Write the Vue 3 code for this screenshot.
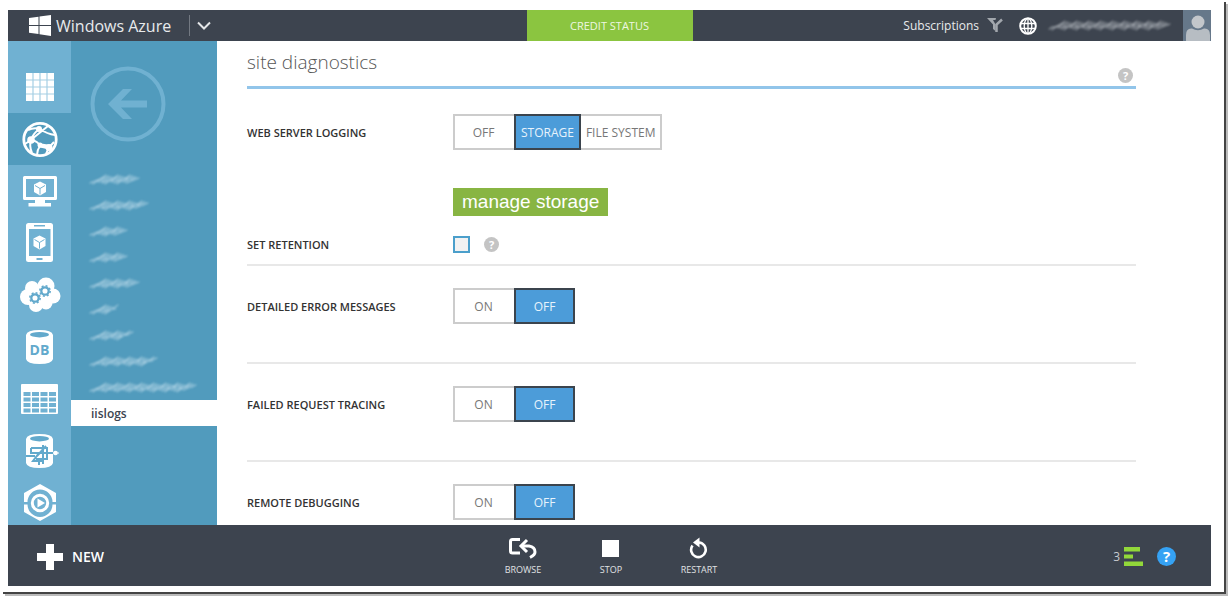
<script setup>
import { ref } from 'vue'

const services = ['All items', 'Web sites', 'Virtual machines', 'Mobile services', 'Cloud services', 'SQL databases', 'Storage', 'HDInsight', 'Media services']
const active = ref(1)

// Widths of the obscured site names, in pixels
const hiddenSites = [51, 60, 39, 41, 51, 32, 45, 69, 109]

// Slanted overlapping pen strokes that hide a name of the given width
function scribble(width) {
  let d = ''
  for (let x = 1; x < width - 13; x += 3) {
    const rise = (x * 7) % 4
    d += `M${x} ${12 - (x % 4)}L${x + 13} ${3 + rise}`
  }
  return d
}

const diagnostics = ref([
  { id: 'errors', label: 'DETAILED ERROR MESSAGES', value: 'OFF' },
  { id: 'tracing', label: 'FAILED REQUEST TRACING', value: 'OFF' },
  { id: 'debug', label: 'REMOTE DEBUGGING', value: 'OFF' }
])
const logging = ref('STORAGE')
const retention = ref(false)
</script>

<template>
  <div class="frame">
    <div class="portal">
      <header class="topbar">
        <div class="brand">
          <svg width="22" height="21" viewBox="0 0 22 21" aria-hidden="true">
            <path fill="#fff" d="M0 3 9.500 1.800V10H0zM10.500 1.600 22 0V10H10.500zM0 11H9.500V19L0 17.800zM10.500 11H22V21L10.500 19.300z" />
          </svg>
          <span class="name">Windows Azure</span>
          <button class="chev" aria-label="Switch portal">
            <svg width="14" height="9" viewBox="0 0 14 9"><path d="M1 1.500 7 7.500 13 1.500" fill="none" stroke="#e4e6e8" stroke-width="2" /></svg>
          </button>
        </div>
        <button class="credit">CREDIT STATUS</button>
        <div class="account">
          <button class="subs">Subscriptions
            <svg width="16" height="15" viewBox="0 0 16 15">
              <path d="M0 0H9L8.500 2H6L8.500 6.500V13L6 11V6.500z" fill="#a2a7ad" />
              <path d="M15 1.500 9.500 6.500V14" fill="none" stroke="#a2a7ad" stroke-width="2.500" />
            </svg>
          </button>
          <button class="globe" aria-label="Language">
            <svg width="18" height="18" viewBox="0 0 18 18" fill="none" stroke="#fff">
              <circle cx="9" cy="9" r="7.800" stroke-width="2" />
              <ellipse cx="9" cy="9" rx="3.800" ry="7.500" stroke-width="1.300" />
              <path d="M9 1V17M1.500 6.500H16.500M1.500 11.500H16.500" stroke-width="1.300" />
            </svg>
          </button>
          <svg class="smudge" width="126" height="15" viewBox="0 0 126 15" aria-hidden="true">
            <path :d="scribble(124)" stroke="#a9aeb4" />
            <path d="M3 9 120 7" stroke="#8d939b" />
          </svg>
          <button class="avatar" aria-label="Account">
            <svg width="28" height="31" viewBox="0 0 28 31">
              <circle cx="15" cy="12" r="6.500" fill="#c3c7cb" />
              <path d="M3 31V25Q3 18 9 18.500Q15 22 21 18.500Q27 18 27 25V31z" fill="#b7bdc3" />
            </svg>
          </button>
        </div>
      </header>

      <div class="body">
        <nav class="rail" aria-label="Services">
          <button v-for="(s, i) in services" :key="s" :class="{ on: i === active }" :aria-label="s" @click="active = i">
            <svg width="42" height="42" viewBox="0 0 42 42">
              <template v-if="i === 0">
                <rect x="7" y="7" width="28" height="28" fill="#fff" />
                <path d="M14 7V35M21 7V35M28 7V35M7 14H35M7 21H35M7 28H35" stroke="#a5cfe4" stroke-width="1.200" />
              </template>
              <template v-else-if="i === 1">
                <g fill="none" stroke="#fff">
                  <circle cx="21" cy="21.500" r="16.200" stroke-width="2.800" />
                  <path d="M9 12Q15 9 21 11Q28 16 36 17M21 11Q14 15 12 22Q10 28 13 35M12 22Q19 23 21 28L30 29.500M13 21 29 8M21 28Q18 32 18 37M30 29.500 35 24M30 29.500 27 36M12 22 6 26" stroke-width="2" />
                </g>
                <g fill="#fff">
                  <circle cx="20" cy="11" r="3" /><circle cx="12" cy="22" r="3.800" /><circle cx="21" cy="27" r="2.500" /><circle cx="30" cy="29.500" r="3.500" />
                  <path d="M19 25 32 27V32L19 29z" />
                </g>
              </template>
              <template v-else-if="i === 2">
                <path fill="#fff" fill-rule="evenodd" d="M5.500 6H36.500Q38 6 38 7.500V28.500Q38 30 36.500 30H26V33H32V36.500H9.500V33H16V30H5.500Q4 30 4 28.500V7.500Q4 6 5.500 6zM7 9V27H35V9z" />
                <path fill="#fff" d="M21 11.500 27 14.500V22L21 25.500 15 22V14.500z" />
                <path d="M16 15.500 21 18.500 26 15.500M21 18.500V24.500" stroke="#70b1d2" stroke-width="1" fill="none" />
              </template>
              <template v-else-if="i === 3">
                <path fill="#fff" fill-rule="evenodd" d="M9.500 1H31.500Q34 1 34 3.500V37.500Q34 40 31.500 40H9.500Q7 40 7 37.500V3.500Q7 1 9.500 1zM10 7V34H31.500V7zM15 3V4.500H26V3zM17.500 36V38H23.500V36z" />
                <path fill="#fff" d="M20.500 13.500 26.500 16.500V24L20.500 27.500 14.500 24V16.500z" />
                <path d="M15.500 17.500 20.500 20.500 25.500 17.500M20.500 20.500V26.500" stroke="#70b1d2" fill="none" />
              </template>
              <template v-else-if="i === 4">
                <g fill="#fff">
                  <circle cx="9" cy="23" r="8" /><circle cx="13" cy="14" r="7" /><circle cx="27" cy="12" r="8.500" /><circle cx="34" cy="22" r="7.500" /><circle cx="17" cy="31" r="7" /><circle cx="27" cy="29" r="6.500" />
                  <rect x="10" y="11" width="22" height="20" />
                </g>
                <g fill="none" stroke="#62a9cc">
                  <circle cx="16" cy="24" r="3.700" stroke-width="2.300" /><circle cx="16" cy="24" r="5.200" stroke-width="1.500" stroke-dasharray="2 2.080" />
                  <circle cx="26" cy="17" r="3.700" stroke-width="2.300" /><circle cx="26" cy="17" r="5.200" stroke-width="1.500" stroke-dasharray="2 2.080" />
                </g>
              </template>
              <template v-else-if="i === 5">
                <path fill="#fff" d="M7 9Q8 4 20.500 4T34 9V33Q33 38 20.500 38T7 33z" />
                <ellipse cx="20.500" cy="8.700" rx="9.500" ry="2.700" fill="#62a9cc" />
                <text x="20.500" y="29" text-anchor="middle" class="db">DB</text>
              </template>
              <template v-else-if="i === 6">
                <rect x="2" y="6" width="37" height="30" rx="1" fill="#fff" />
                <path d="M4.500 16H37M4.500 21.500H37M4.500 27H37M4.500 32.500H37" stroke="#70b1d2" stroke-width="4" stroke-dasharray="7 1.500" />
              </template>
              <template v-else-if="i === 7">
                <path fill="#fff" d="M7 9Q8 4 20.500 4T34 9V33Q33 38 20.500 38T7 33z" />
                <ellipse cx="20.500" cy="8.700" rx="9.500" ry="2.700" fill="#62a9cc" />
                <g fill="none" stroke="#62a9cc" stroke-width="2">
                  <path d="M12 18H28V29H17M12 18V23H20L14 31H24M24 15V34M18 26 27 16M20 30V35M7 26H16M22 23H34" />
                </g>
                <circle cx="36.500" cy="23" r="2.300" fill="#fff" /><path d="M34 23H40" stroke="#fff" />
              </template>
              <template v-else>
                <path fill="#fff" d="M21 2 37 11V20H33.500A12.500 12.500 0 0 0 8.500 20H5V11zM21 39 37 30V22.500H33.500A12.500 12.500 0 0 1 8.500 22.500H5V30z" />
                <circle cx="21" cy="21" r="7.700" fill="none" stroke="#fff" stroke-width="3" />
                <path d="M18.500 16.500V25.500L26 21z" fill="#fff" />
              </template>
            </svg>
          </button>
        </nav>

        <aside class="sites">
          <button class="back" aria-label="Back">
            <svg width="76" height="76" viewBox="0 0 76 76">
              <circle cx="38" cy="38" r="35.500" fill="none" stroke="#70b1d1" stroke-width="4" />
              <path fill="#70b1d1" d="M18 38 33 23H42L31 34.500H57V41.500H31L42 53H33z" />
            </svg>
          </button>
          <ul>
            <li v-for="(w, i) in hiddenSites" :key="i">
              <svg class="smudge" :width="w + 2" height="15" :viewBox="`-1 0 ${w + 2} 15`" aria-hidden="true">
                <path :d="scribble(w)" stroke="#b5d6e6" />
                <path :d="`M3 10 ${w - 5} 7`" stroke="#8fc0d8" />
              </svg>
            </li>
            <li class="current"><a href="#iislogs">iislogs</a></li>
          </ul>
        </aside>

        <main>
          <div class="title">
            <h1>site diagnostics</h1>
            <button class="help" aria-label="Help on diagnostics">?</button>
          </div>

          <section class="weblog">
            <div class="row">
              <span id="logging" class="label">WEB SERVER LOGGING</span>
              <div class="toggle" role="group" aria-labelledby="logging">
                <button v-for="o in ['OFF', 'STORAGE', 'FILE SYSTEM']" :key="o" :class="{ on: logging === o }" @click="logging = o">{{ o }}</button>
              </div>
            </div>
            <div class="row manage">
              <button class="storage">manage storage</button>
            </div>
            <div class="row">
              <label class="label" for="retention">SET RETENTION</label>
              <input id="retention" v-model="retention" type="checkbox">
              <button class="help" aria-label="Help on retention">?</button>
            </div>
          </section>

          <section v-for="d in diagnostics" :key="d.id" class="setting">
            <div class="row">
              <span :id="d.id" class="label">{{ d.label }}</span>
              <div class="toggle" role="group" :aria-labelledby="d.id">
                <button v-for="o in ['ON', 'OFF']" :key="o" :class="{ on: d.value === o }" @click="d.value = o">{{ o }}</button>
              </div>
            </div>
          </section>
        </main>
      </div>

      <footer>
        <button class="new">
          <svg width="26" height="26" viewBox="0 0 26 26"><path fill="#fff" d="M9 0H17V9H26V17H17V26H9V17H0V9H9z" /></svg>
          NEW
        </button>
        <div class="commands">
          <button>
            <svg width="28" height="22" viewBox="0 0 28 22" fill="none" stroke="#fff" stroke-width="3">
              <path d="M11 2.500H3.500Q1.500 2.500 1.500 4.500V14Q1.500 16 3.500 16H11" />
              <path d="M12 9H20Q26 10 26 15Q26 18 21 20.500" />
              <path d="M18 3 12 9 18 15" />
            </svg>
            BROWSE
          </button>
          <button>
            <svg width="28" height="22" viewBox="0 0 28 22"><rect x="5" y="3" width="17" height="17" fill="#fff" /></svg>
            STOP
          </button>
          <button>
            <svg width="28" height="22" viewBox="0 0 28 22">
              <path d="M7.500 8.500A7.300 7.300 0 1 0 14 5.500" fill="none" stroke="#fff" stroke-width="2.600" />
              <path d="M8 5.500 14.500 0.500V10.500z" fill="#fff" />
            </svg>
            RESTART
          </button>
        </div>
        <div class="status">
          <button class="jobs" aria-label="3 notifications">3
            <svg width="19" height="19" viewBox="0 0 19 19"><path fill="#92d83a" d="M0 0H16V4.500H0zM0 7.500H9V11.500H0zM0 14.500H19V19H0z" /></svg>
          </button>
          <button class="help blue" aria-label="Help">?</button>
        </div>
      </footer>
    </div>
  </div>
</template>

<style>
html, body { margin: 0; background: #fff; }
</style>

<style scoped>
* { box-sizing: border-box; }
.frame {
  height: 100vh;
  min-height: 400px;
  padding: 10px 17px 10px 8px;
  background:
    linear-gradient(#444, #444) right 2px top 2px / 2px calc(100% - 4px) no-repeat,
    linear-gradient(#444, #444) left 3px bottom 2px / calc(100% - 5px) 2px no-repeat,
    linear-gradient(#bbb, #bbb) right 0 top 4px / 2px 100% no-repeat,
    linear-gradient(#bbb, #bbb) left 5px bottom 0 / 100% 2px no-repeat,
    #fff;
  font-family: "Open Sans", "Noto Sans", sans-serif;
  color: #333;
}
button {
  margin: 0;
  padding: 0;
  border: 0;
  background: none;
  color: inherit;
  font: inherit;
  cursor: pointer;
}
svg { display: block; flex: none; }
.portal { display: flex; flex-direction: column; height: 100%; }
.topbar {
  display: grid;
  grid-template-columns: 1fr 166px 1fr;
  flex: 0 0 31px;
  background: #3d444f;
  color: #e8eaec;
}
.brand { display: flex; align-items: center; padding-left: 21px; }
.name { margin-left: 5px; font-size: 16px; line-height: 22px; }
.chev { margin-left: 18px; padding: 6px 7px; border-left: 1px solid #737982; }
.credit { background: #8bc540; color: #eef7e2; font-size: 11px; }
.account { display: flex; align-items: center; justify-content: flex-end; }
.subs { display: flex; align-items: center; gap: 8px; font-size: 12px; }
.globe { margin: 0 11px 0 16px; }
.smudge { fill: none; stroke-width: 1; stroke-linecap: round; filter: blur(1px); }
.avatar { margin-left: 9px; background: #66788a; }
.body { display: flex; flex: 1; min-height: 0; overflow: hidden; }
.rail {
  display: flex;
  flex-direction: column;
  flex: 0 0 63px;
  padding-top: 20px;
  background: #70b1d2;
}
.rail button {
  display: flex;
  flex: 0 0 52px;
  align-items: center;
  justify-content: center;
}
.rail .on { background: #519bbd; }
.db { fill: #62a9cc; font: 700 14px "Open Sans", sans-serif; }
.sites { flex: 0 0 146px; background: #519bbd; }
.back { display: block; margin: 25px 0 24px 19px; }
ul { margin: 0; padding: 0; list-style: none; }
li { display: flex; align-items: center; height: 26px; padding-left: 17px; }
.current { padding-left: 20px; background: #fff; font-size: 12px; font-weight: 600; }
.current a { color: #3c4450; text-decoration: none; }
main { flex: 1; min-width: 0; padding: 0 75px 0 30px; }
.title {
  display: flex;
  align-items: flex-start;
  justify-content: space-between;
  height: 48px;
  padding-right: 3px;
  border-bottom: 3px solid #92c5ea;
}
h1 { margin: 0; color: #555; font-size: 19px; font-weight: 300; line-height: 42px; }
.title .help { margin-top: 27px; }
.help {
  width: 15px;
  height: 15px;
  border-radius: 50%;
  background: #c4c4c4;
  color: #fff;
  font-size: 11px;
  font-weight: 700;
  line-height: 15px;
}
.row { display: flex; align-items: center; }
.label { flex: 0 0 206px; font-size: 11px; font-weight: 600; }
.weblog { padding: 25px 0 11px; border-bottom: 2px solid #e8e8e8; }
.toggle { display: flex; height: 36px; border: 2px solid #ccc; }
.toggle button {
  min-width: 61px;
  margin: -2px 0;
  padding: 0 5px;
  color: #777;
  font-size: 12px;
}
.toggle button:first-child { margin-left: -2px; }
.toggle button:last-child { margin-right: -2px; padding-right: 7px; }
.toggle .on, .toggle .on:last-child {
  padding: 0 5px;
  border: 2px solid #3b444d;
  background: #4c9cd9;
  color: #e7f3fc;
}
.manage { margin: 38px 0 20px; padding-left: 206px; }
.storage {
  height: 28px;
  padding: 0 9px;
  background: #88b543;
  color: #fff;
  font: 19px "Liberation Sans", Arial, sans-serif;
}
input {
  width: 17px;
  height: 17px;
  margin: 0 14px 0 0;
  border: 2px solid #4b9fcb;
  background: #f2f2f2;
  appearance: none;
}
input:checked { background: #4b9fcb; }
.setting { height: 98px; padding-top: 22px; border-bottom: 2px solid #e8e8e8; }
footer {
  display: grid;
  grid-template-columns: 1fr auto 1fr;
  align-items: center;
  flex: 0 0 61px;
  padding: 2px 35px 0 29px;
  background: #3d444f;
  color: #fff;
}
.new { display: flex; align-items: center; justify-self: start; gap: 9px; font-size: 14px; font-weight: 600; }
.commands { display: flex; padding-left: 9px; }
.commands button {
  display: flex;
  flex-direction: column;
  align-items: center;
  gap: 5px;
  width: 88px;
  color: #e0e2e4;
  font-size: 9px;
  line-height: 12px;
}
.status { display: flex; align-items: center; justify-content: flex-end; gap: 14px; }
.jobs { display: flex; align-items: center; gap: 4px; color: #c8cbcf; font-size: 12px; }
.blue { width: 19px; height: 19px; background: #35a2f4; font-size: 15px; line-height: 19px; }
</style>
